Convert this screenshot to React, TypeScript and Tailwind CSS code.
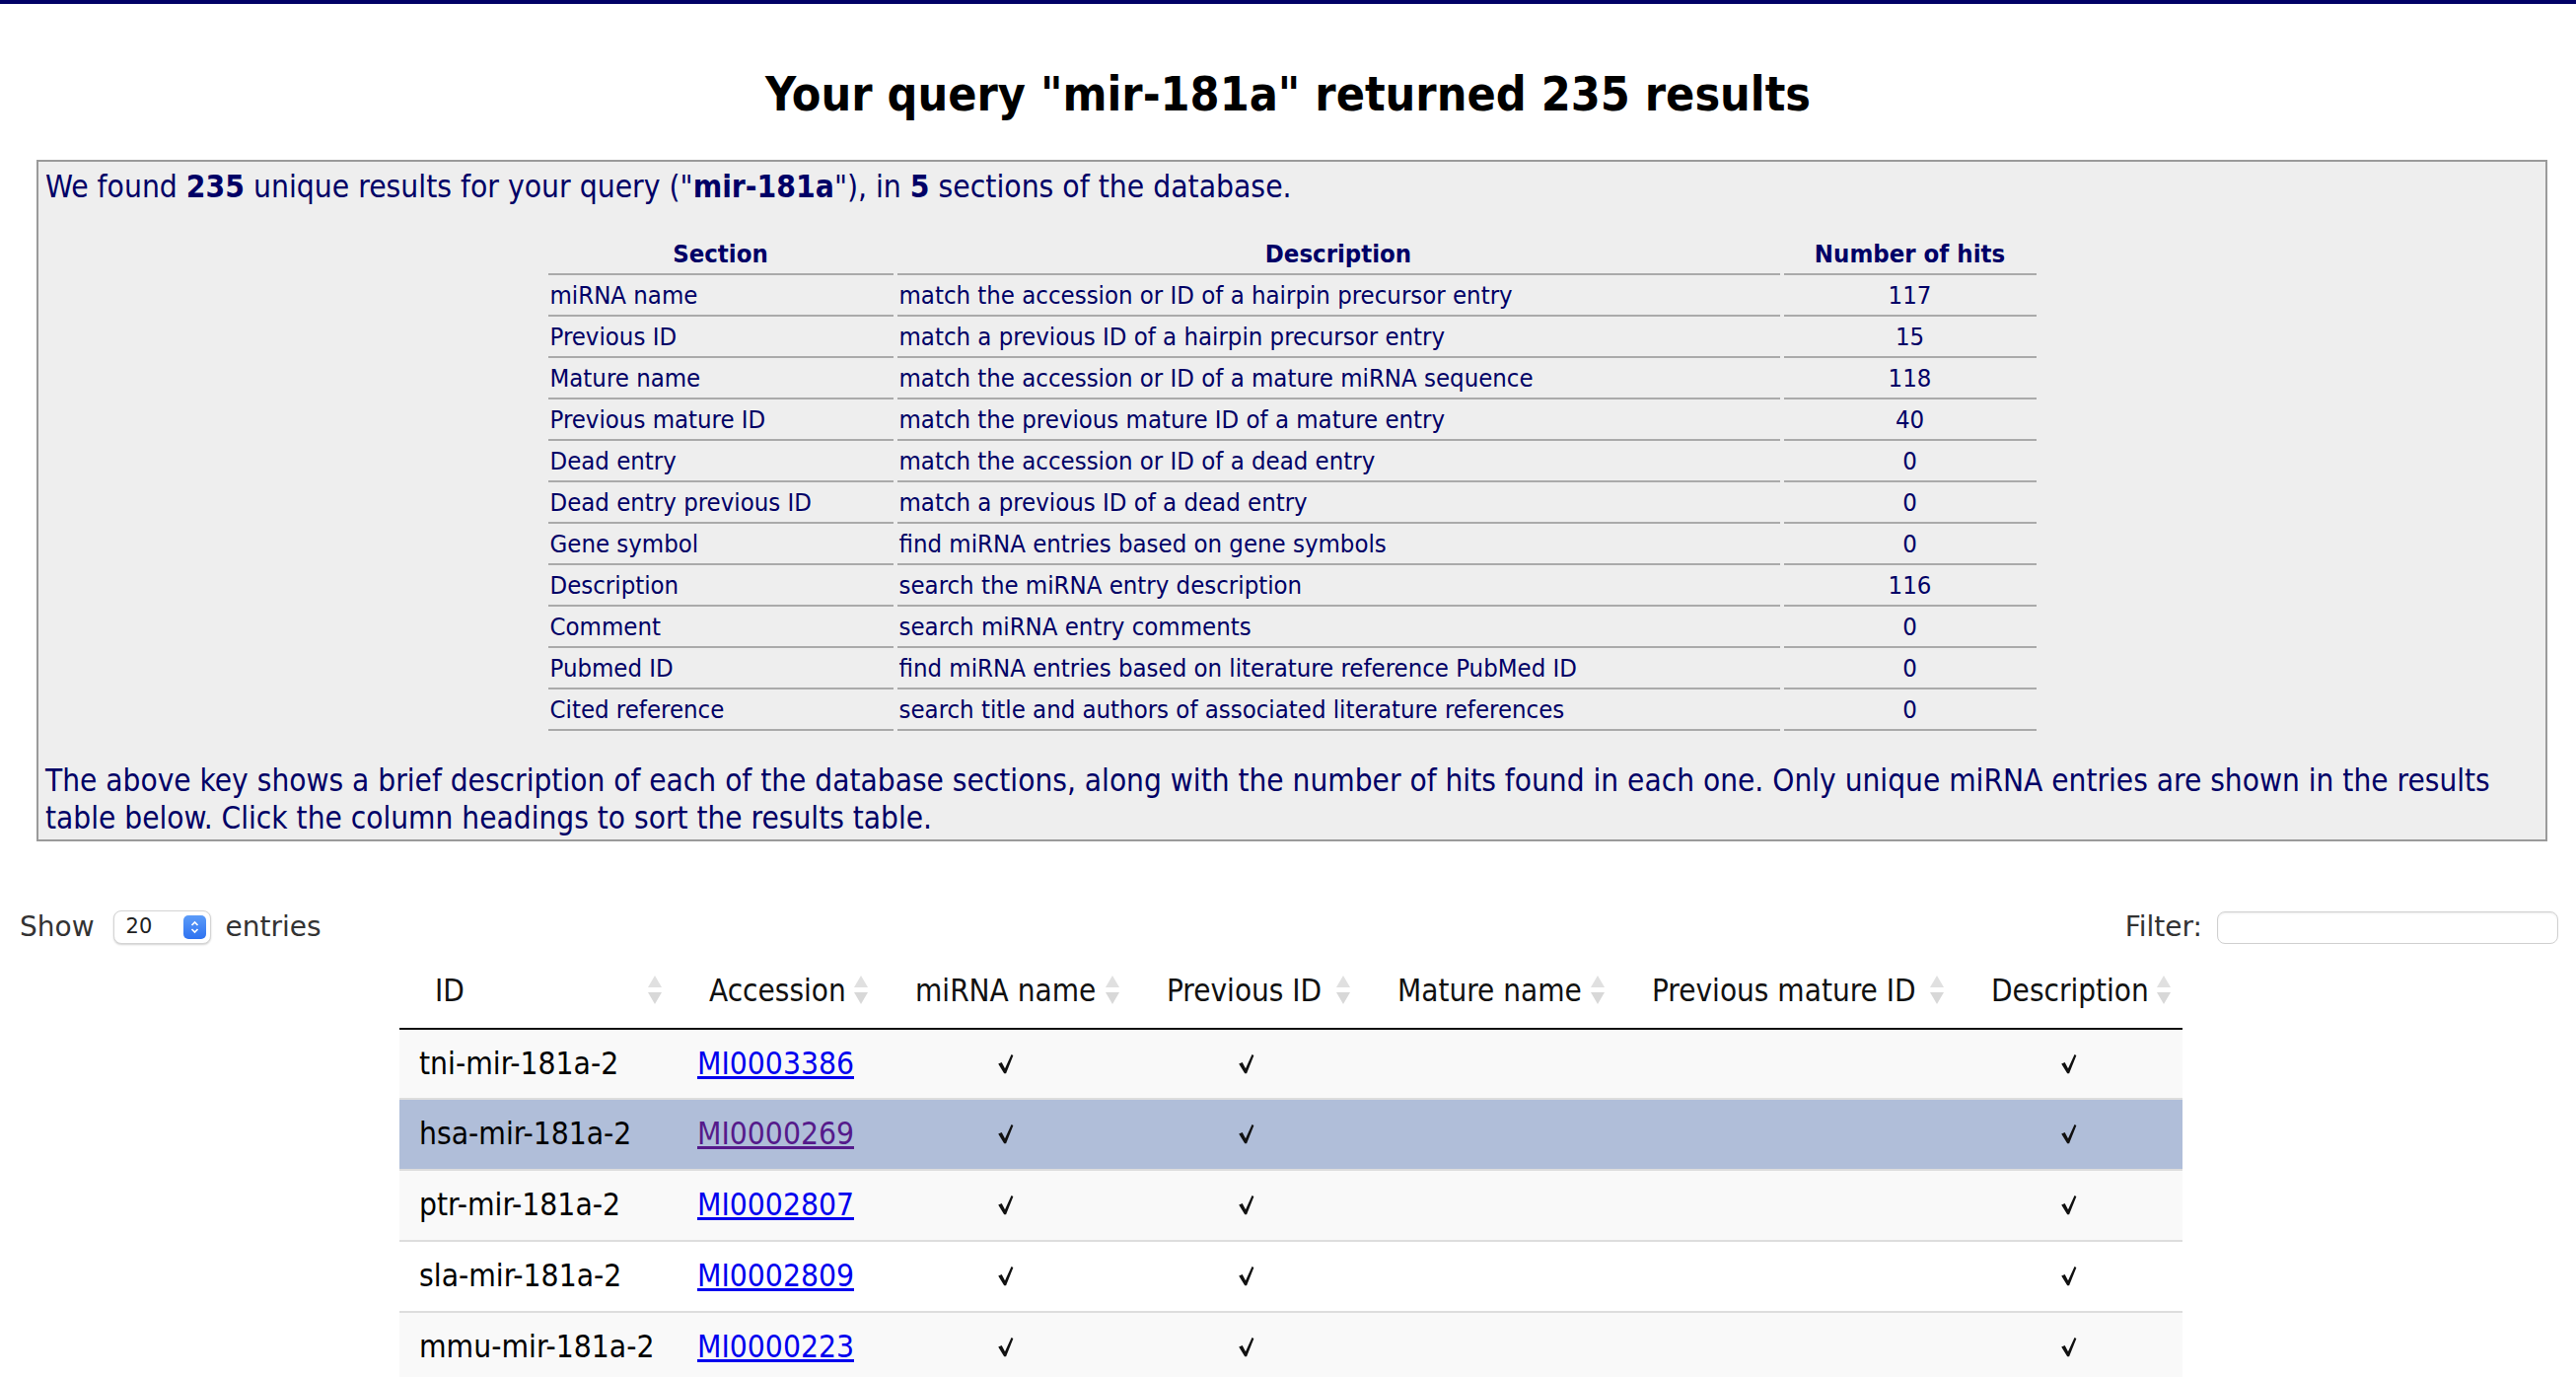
import React from "react";

const sections: [string, string, string][] = [
  ["miRNA name", "match the accession or ID of a hairpin precursor entry", "117"],
  ["Previous ID", "match a previous ID of a hairpin precursor entry", "15"],
  ["Mature name", "match the accession or ID of a mature miRNA sequence", "118"],
  ["Previous mature ID", "match the previous mature ID of a mature entry", "40"],
  ["Dead entry", "match the accession or ID of a dead entry", "0"],
  ["Dead entry previous ID", "match a previous ID of a dead entry", "0"],
  ["Gene symbol", "find miRNA entries based on gene symbols", "0"],
  ["Description", "search the miRNA entry description", "116"],
  ["Comment", "search miRNA entry comments", "0"],
  ["Pubmed ID", "find miRNA entries based on literature reference PubMed ID", "0"],
  ["Cited reference", "search title and authors of associated literature references", "0"],
];

type Row = {
  id: string;
  acc: string;
  visited?: boolean;
  selected?: boolean;
};

const rows: Row[] = [
  { id: "tni-mir-181a-2", acc: "MI0003386" },
  { id: "hsa-mir-181a-2", acc: "MI0000269", visited: true, selected: true },
  { id: "ptr-mir-181a-2", acc: "MI0002807" },
  { id: "sla-mir-181a-2", acc: "MI0002809" },
  { id: "mmu-mir-181a-2", acc: "MI0000223" },
];

const headers = [
  "ID",
  "Accession",
  "miRNA name",
  "Previous ID",
  "Mature name",
  "Previous mature ID",
  "Description",
];

function SortIcon() {
  return (
    <svg width="16" height="30" viewBox="0 0 16 30" className="shrink-0">
      <polygon points="8,0 15,12 1,12" fill="#e0e0e0" />
      <polygon points="1,17 15,17 8,29" fill="#d8d8d8" />
    </svg>
  );
}

function Check() {
  return (
    <svg width="16" height="20" viewBox="0 0 16 20">
      <path d="M0.2 9.6 L3.7 7.9 L7 14.2 L13.5 0 L15.4 0.9 L8.1 19.2 L6.2 19.2 Z" fill="#111111" />
    </svg>
  );
}

export default function App() {
  return (
    <div className="h-[1396px] overflow-hidden bg-white font-['DejaVu_Sans_Condensed','DejaVu_Sans',sans-serif]">
      <div className="h-[4px] bg-[#000066]" />

      <h1 className="mt-[63px] text-center text-[48px] font-bold leading-[56px] text-black">
        Your query "mir-181a" returned 235 results
      </h1>

      <div className="ml-[37px] mr-[29px] mt-[39px] border-2 border-[#9a9a9a] bg-[#eeeeee] pl-[7px] pr-[7px] pt-[6px] pb-[3px] text-[#000066]">
        <p className="text-[31.5px] leading-[38px]">
          We found <b>235</b> unique results for your query ("<b>mir-181a</b>"), in <b>5</b> sections of the database.
        </p>

        <div className="mx-auto mt-[29px] grid w-[1509px] grid-cols-[350px_895px_256px] gap-x-[4px] text-[25.5px]">
          <div className="flex h-[42px] items-center justify-center border-b-2 border-[#aaaaaa] font-bold">Section</div>
          <div className="flex h-[42px] items-center justify-center border-b-2 border-[#aaaaaa] font-bold">Description</div>
          <div className="flex h-[42px] items-center justify-center border-b-2 border-[#aaaaaa] font-bold">Number of hits</div>
          {sections.map(([s, d, n]) => (
            <React.Fragment key={s}>
              <div className="flex h-[42px] items-center border-b-2 border-[#aaaaaa] pl-[2px]">{s}</div>
              <div className="flex h-[42px] items-center border-b-2 border-[#aaaaaa] pl-[2px]">{d}</div>
              <div className="flex h-[42px] items-center justify-center border-b-2 border-[#aaaaaa]">{n}</div>
            </React.Fragment>
          ))}
        </div>

        <p className="mt-[31px] text-[31.3px] leading-[38px]">
          The above key shows a brief description of each of the database sections, along with the number of hits found in each one. Only unique miRNA entries are shown in the results
          <br />
          table below. Click the column headings to sort the results table.
        </p>
      </div>

      <div className="mt-[66px] flex items-center justify-between pl-[20px] pr-[18px] font-['DejaVu_Sans',sans-serif] text-[28px] text-[#333333]">
        <div className="flex items-center">
          <span>Show</span>
          <div className="ml-[19px] mr-[15px] flex h-[34px] w-[99px] items-center justify-between rounded-[8px] border border-[#d4d4d4] bg-white pl-[12px] pr-[4px] shadow-[0_1px_2px_rgba(0,0,0,0.18)]">
            <span className="text-[21px] text-[#222222]">20</span>
            <div className="flex h-[24px] w-[23px] flex-col items-center justify-center rounded-[5px] bg-gradient-to-b from-[#5b9bf8] to-[#2f72f0]">
              <svg width="11" height="16" viewBox="0 0 11 16">
                <polyline points="2.5,6 5.5,3 8.5,6" fill="none" stroke="white" strokeWidth="1.7" />
                <polyline points="2.5,10 5.5,13 8.5,10" fill="none" stroke="white" strokeWidth="1.7" />
              </svg>
            </div>
          </div>
          <span>entries</span>
        </div>
        <div className="flex items-center">
          <span>Filter:</span>
          <input
            type="text"
            className="ml-[15px] h-[33px] w-[346px] rounded-[8px] border border-[#d0d0d0] bg-white shadow-[inset_0_1px_2px_rgba(0,0,0,0.08)] outline-none"
          />
        </div>
      </div>

      <div className="ml-[405px] mt-[5px] w-[1808px] text-[#111111]">
        <div className="grid h-[78px] grid-cols-[278px_209px_255px_234px_258px_344px_230px] border-b-2 border-[#111111] text-[31.2px]">
          {headers.map((h) => (
            <div key={h} className="flex items-center justify-between pl-[36px] pr-[11px]">
              <span className="whitespace-nowrap">{h}</span>
              <SortIcon />
            </div>
          ))}
        </div>
        {rows.map((r, i) => {
          const bg = r.selected ? "bg-[#b0bed9]" : i % 2 === 0 ? "bg-[#f9f9f9]" : "bg-white";
          const border = i === 0 ? "h-[69px]" : "h-[72px] border-t-2 border-[#dddddd]";
          return (
            <div
              key={r.id}
              className={`grid grid-cols-[278px_209px_255px_234px_258px_344px_230px] text-[31.5px] ${bg} ${border}`}
            >
              <div className="flex items-center pl-[20px] text-[#000000]">{r.id}</div>
              <div className="flex items-center pl-[24px]">
                <a
                  href="#"
                  className={r.visited ? "text-[#551a8b] underline" : "text-[#0000ee] underline"}
                >
                  {r.acc}
                </a>
              </div>
              <div className="flex items-center justify-center"><Check /></div>
              <div className="flex items-center justify-center"><Check /></div>
              <div />
              <div />
              <div className="flex items-center justify-center"><Check /></div>
            </div>
          );
        })}
      </div>
    </div>
  );
}
